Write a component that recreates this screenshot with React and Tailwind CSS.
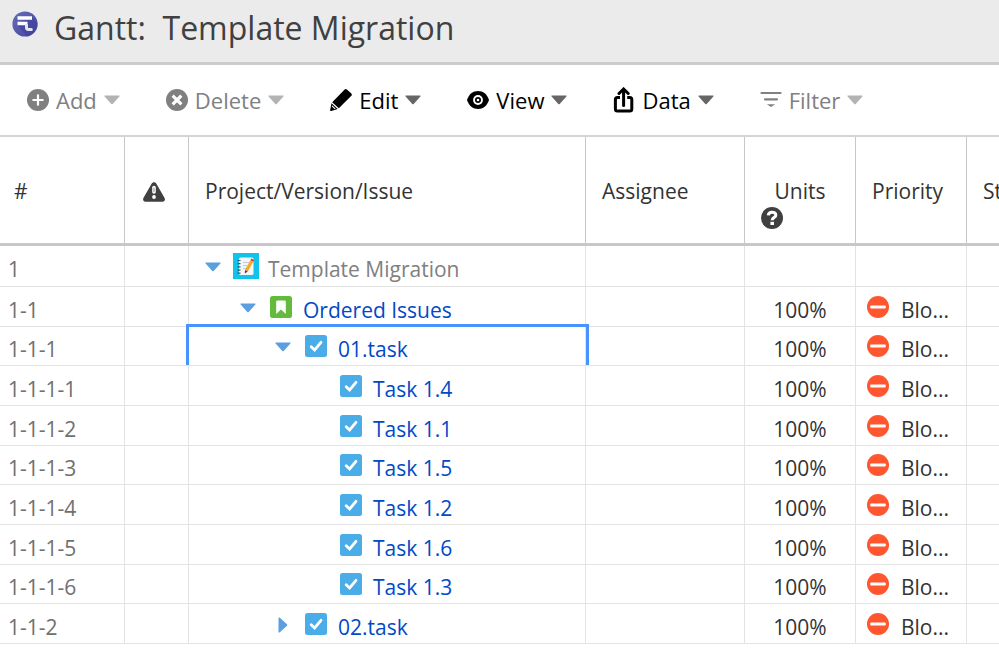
import React, { useState } from "react";

const rows = [
  { id: "1", name: "Template Migration", level: 0, type: "project", open: true },
  { id: "1-1", name: "Ordered Issues", level: 1, type: "story", open: true, units: "100%", priority: "Blo..." },
  { id: "1-1-1", name: "01.task", level: 2, type: "task", open: true, units: "100%", priority: "Blo..." },
  { id: "1-1-1-1", name: "Task 1.4", level: 3, type: "task", units: "100%", priority: "Blo..." },
  { id: "1-1-1-2", name: "Task 1.1", level: 3, type: "task", units: "100%", priority: "Blo..." },
  { id: "1-1-1-3", name: "Task 1.5", level: 3, type: "task", units: "100%", priority: "Blo..." },
  { id: "1-1-1-4", name: "Task 1.2", level: 3, type: "task", units: "100%", priority: "Blo..." },
  { id: "1-1-1-5", name: "Task 1.6", level: 3, type: "task", units: "100%", priority: "Blo..." },
  { id: "1-1-1-6", name: "Task 1.3", level: 3, type: "task", units: "100%", priority: "Blo..." },
  { id: "1-1-2", name: "02.task", level: 2, type: "task", open: false, units: "100%", priority: "Blo..." },
];

const indent = ["pl-[16px]", "pl-[51px]", "pl-[86px]", "pl-[121px]"];

const GanttLogo = () => (
  <svg viewBox="0 0 26 26" className="w-[26px] h-[26px] shrink-0" aria-hidden="true">
    <defs>
      <linearGradient id="logo" x1="0" y1="0" x2="1" y2="1">
        <stop offset="0" stopColor="#656bb9" />
        <stop offset="1" stopColor="#4347a0" />
      </linearGradient>
    </defs>
    <circle cx="13" cy="13" r="12.6" fill="url(#logo)" />
    <path d="M20 6 25.5 11.500A12.600 12.600 0 0 1 15 25.400L5.500 14z" fill="#3c4094" opacity=".5" />
    <path d="M5.500 5.300h14.500v3.500H5.500zM5.500 10.800h10v3.400H5.500z" fill="#fff" />
    <path d="M14.500 14v2.500c0 1.200.6 1.900 1.800 1.900h3" stroke="#e4e5f3" strokeWidth="3" strokeLinecap="round" fill="none" />
  </svg>
);

const AddIcon = () => (
  <svg viewBox="0 0 22 22" className="w-[22px] h-[22px]" aria-hidden="true">
    <circle cx="11" cy="11" r="11" fill="currentColor" />
    <path d="M11 6.300v9.400M6.300 11h9.400" stroke="#fff" strokeWidth="2.200" strokeLinecap="round" />
  </svg>
);

const DeleteIcon = () => (
  <svg viewBox="0 0 22 22" className="w-[22px] h-[22px]" aria-hidden="true">
    <circle cx="11" cy="11" r="11" fill="currentColor" />
    <path d="m7.800 7.800 6.400 6.400M14.200 7.800l-6.400 6.400" stroke="#fff" strokeWidth="3.200" strokeLinecap="square" />
  </svg>
);

const EditIcon = () => (
  <svg viewBox="0 0 22 22" className="w-[22px] h-[22px]" aria-hidden="true" fill="currentColor">
    <path d="M14.400.7a2 2 0 0 1 2.800 0l3.900 3.500a2 2 0 0 1 0 2.900L8.800 19.300 2.200 13.200z" />
    <path d="M1.500 14.200 7.700 20l-6.400 1.900a.9.900 0 0 1-1.100-1.100z" />
    <path d="m2 16.800 3.200 3" stroke="#fff" strokeWidth="1.100" />
  </svg>
);

const ViewIcon = () => (
  <svg viewBox="0 0 22 22" className="w-[22px] h-[22px]" aria-hidden="true">
    <path d="M0 11C1.800 5.200 6 2 11 2S20.200 5.200 22 11c-1.800 5.800-6 9-11 9S1.800 16.800 0 11z" fill="currentColor" />
    <circle cx="11" cy="11" r="4.900" fill="#fff" />
    <circle cx="11" cy="11" r="3" fill="currentColor" />
    <circle cx="11" cy="11" r="1.300" fill="#fff" />
  </svg>
);

const DataIcon = () => (
  <svg viewBox="0 0 22 26" className="w-[22px] h-[26px]" aria-hidden="true" fill="none" stroke="currentColor" strokeWidth="3">
    <path d="M7 10.600H4.400a2 2 0 0 0-2 2v9.400a2 2 0 0 0 2 2h12.400a2 2 0 0 0 2-2v-9.400a2 2 0 0 0-2-2h-2.600" />
    <path d="M10.600 18.500V3" strokeLinecap="round" />
    <path d="M6 6.500 10.600 2l4.600 4.500" strokeLinecap="round" />
  </svg>
);

const FilterIcon = () => (
  <svg viewBox="0 0 22 22" className="w-[22px] h-[22px]" aria-hidden="true" stroke="currentColor" strokeWidth="2.200" strokeLinecap="round">
    <path d="M1.500 4h19M5 10.300h12" />
    <path d="M9.500 16h3l-1.500 1z" fill="currentColor" strokeWidth="1.600" />
  </svg>
);

const Caret = ({ className }) => (
  <svg viewBox="0 0 16 10" className={className} aria-hidden="true" fill="currentColor">
    <path d="M1 .5h14c.6 0 .8.7.4 1.100L8.700 9a1 1 0 0 1-1.400 0L.6 1.600C.2 1.200.4.5 1 .5z" />
  </svg>
);

const WarningIcon = () => (
  <svg viewBox="0 0 22 20" className="w-[22px] h-[20px]" aria-hidden="true">
    <path d="M8.600 1.700c1-2 3.800-2 4.800 0l8.200 14.300c.9 1.700-.1 3.700-2 3.700H2.400c-1.900 0-2.900-2-2-3.700z" fill="#404040" />
    <path d="M11 5.500v4.500" stroke="#fff" strokeWidth="3.600" strokeLinecap="round" />
    <path d="M11 6v3.500" stroke="#404040" strokeWidth=".6" strokeLinecap="round" />
    <circle cx="11" cy="15" r="1.900" fill="#fff" />
  </svg>
);

const HelpIcon = () => (
  <svg viewBox="0 0 22 22" className="w-[22px] h-[22px]" aria-hidden="true">
    <circle cx="11" cy="11" r="11" fill="#404040" />
    <path d="M7.300 8.400C7.500 6.300 9 5.200 11 5.200c2.200 0 3.800 1.100 3.800 3 0 2.400-3.600 2.400-3.600 5" fill="none" stroke="#fff" strokeWidth="3.100" />
    <rect x="9.400" y="14.800" width="3.600" height="3.200" fill="#fff" />
  </svg>
);

const ProjectIcon = () => (
  <svg viewBox="0 0 26 26" className="w-[26px] h-[26px]" aria-hidden="true">
    <rect width="26" height="26" fill="#0fc3ea" />
    <rect x="6" y="4.500" width="14.500" height="17.500" rx="1.500" fill="#f4f7fa" />
    <path d="M4.500 7.500h3M4.500 10.700h3M4.500 13.900h3M4.500 17.100h3M4.500 20.200h3" stroke="#44505c" strokeWidth="1.200" />
    <path d="M10 9.500h6M10 12.500h4M10 15.500h3" stroke="#c3cdd6" strokeWidth="1" />
    <path d="m17.400 7.200 2.800 1.600-5.400 9.700-2.800-1.600z" fill="#f9a825" />
    <path d="m17.400 7.200 1-1.700 2.800 1.600-1 1.700z" fill="#e53935" />
    <path d="m12 16.900 2.800 1.600-3 2z" fill="#5d4037" />
  </svg>
);

const StoryIcon = () => (
  <svg viewBox="0 0 22 22" className="w-[22px] h-[22px]" aria-hidden="true">
    <rect width="22" height="22" rx="2.500" fill="#63ba3c" />
    <path d="M6.200 5.800a1.300 1.300 0 0 1 1.300-1.300h7a1.300 1.300 0 0 1 1.300 1.300V18L11 13.600 6.200 18z" fill="#fff" />
  </svg>
);

const TaskIcon = () => (
  <svg viewBox="0 0 22 22" className="w-[22px] h-[22px]" aria-hidden="true">
    <rect width="22" height="22" rx="2.500" fill="#4bade8" />
    <path d="m6.200 11.800 3.400 3.200L16 7.300" fill="none" stroke="#fff" strokeWidth="2.800" strokeLinecap="round" />
  </svg>
);

const BlockerIcon = () => (
  <svg viewBox="0 0 22 22" className="w-[22px] h-[22px] shrink-0" aria-hidden="true">
    <circle cx="11" cy="11" r="11" fill="#ff5630" />
    <rect x="3.200" y="9.500" width="15.600" height="3" rx="1" fill="#fff" />
  </svg>
);

const menus = [
  { label: "Add", icon: AddIcon, disabled: true },
  { label: "Delete", icon: DeleteIcon, disabled: true },
  { label: "Edit", icon: EditIcon },
  { label: "View", icon: ViewIcon },
  { label: "Data", icon: DataIcon },
  { label: "Filter", icon: FilterIcon, disabled: true },
];

const typeIcons = { project: ProjectIcon, story: StoryIcon, task: TaskIcon };

const headCell = "h-[109px] pt-[40px] align-top font-normal leading-[28px] whitespace-nowrap border-r border-[#c8c8c8] border-b-3 last:border-r-0";
const cell = "p-0 border-r border-b border-[#e3e3e3] last:border-r-0";

const App = () => {
  const [selected, setSelected] = useState("1-1-1");

  return (
    <div className="min-h-screen bg-white text-[#333] font-['Open_Sans','Noto_Sans',sans-serif] text-[21px] overflow-x-hidden">
      <header className="flex items-start gap-4 px-3 pt-2 pb-[14px] bg-[#ebebeb] border-b-3 border-[#ccc]">
        <div className="mt-[3px]">
          <GanttLogo />
        </div>
        <h1 className="text-[32px] leading-[40px] text-[#404040] whitespace-pre">Gantt:  Template Migration</h1>
      </header>

      <nav className="flex items-center gap-[46px] h-[72px] px-[27px] border-b-2 border-[#d4d4d4] text-[22px]">
        {menus.map(({ label, icon: Icon, disabled }) => (
          <button
            key={label}
            type="button"
            disabled={disabled}
            className={disabled ? "flex items-center gap-[7px] text-[#808080]" : "flex items-center gap-[7px] text-black"}
          >
            <Icon />
            <span>{label}</span>
            <Caret className={disabled ? "w-4 h-[10px] text-[#b3b3b3]" : "w-4 h-[10px] text-[#666]"} />
          </button>
        ))}
      </nav>

      <table className="w-full table-fixed border-separate border-spacing-0">
        <colgroup>
          <col className="w-[125px]" />
          <col className="w-[64px]" />
          <col className="w-[397px]" />
          <col className="w-[159px]" />
          <col className="w-[111px]" />
          <col className="w-[111px]" />
          <col />
        </colgroup>
        <thead>
          <tr>
            <th className={`${headCell} pl-[14px] text-left`}>#</th>
            <th className={`${headCell} pl-[18px]`} aria-label="Warnings">
              <span className="flex h-[30px] items-center">
                <WarningIcon />
              </span>
            </th>
            <th className={`${headCell} pl-4 text-left`}>Project/Version/Issue</th>
            <th className={`${headCell} pl-4 text-left`}>Assignee</th>
            <th className={headCell}>
              Units
              <span className="block pt-0.5 pl-4">
                <HelpIcon />
              </span>
            </th>
            <th className={`${headCell} pl-4 text-left`}>Priority</th>
            <th className={`${headCell} pl-4 text-left`}>St</th>
          </tr>
        </thead>
        <tbody>
          {rows.map((row) => {
            const TypeIcon = typeIcons[row.type];
            const isProject = row.type === "project";
            return (
              <tr
                key={row.id}
                onClick={() => setSelected(row.id)}
                className="h-[40px] first:h-[41px] nth-[3n]:h-[39px]"
              >
                <td className={`${cell} pl-2 pt-1.5 leading-[28px] text-[#707070]`}>{row.id}</td>
                <td className={cell}></td>
                <td className={`${cell} relative ${indent[row.level]}`}>
                  <div className={isProject ? "flex items-center gap-[12px]" : "flex items-center gap-[14px]"}>
                    {row.open === undefined ? (
                      <span className="w-4"></span>
                    ) : (
                      <button type="button" aria-label="Toggle" className="flex justify-center w-4 mt-0.5">
                        <Caret className={row.open ? "w-4 h-[10px] text-[#5c9fe0]" : "w-4 h-[10px] text-[#5c9fe0] -rotate-90"} />
                      </button>
                    )}
                    <div className={isProject ? "flex items-center gap-[9px]" : "flex items-center gap-[11px]"}>
                      <TypeIcon />
                      {isProject ? (
                        <span className="pt-1.5 leading-[28px] text-[#808080]">{row.name}</span>
                      ) : (
                        <a href="#" className="pt-1.5 leading-[28px] text-[#0049c7]">{row.name}</a>
                      )}
                    </div>
                  </div>
                  {selected === row.id && (
                    <div className="absolute z-10 -top-[3px] -left-[3px] -right-[4px] bottom-0 border-3 border-b-0 border-[#4794ff] pointer-events-none"></div>
                  )}
                </td>
                <td className={cell}></td>
                <td className={`${cell} pt-1.5 leading-[28px] text-center`}>{row.units}</td>
                <td className={`${cell} pl-[11px]`}>
                  {row.priority && (
                    <div className="flex items-center gap-3">
                      <BlockerIcon />
                      <span className="pt-1.5 leading-[28px]">{row.priority}</span>
                    </div>
                  )}
                </td>
                <td className={cell}></td>
              </tr>
            );
          })}
        </tbody>
      </table>
    </div>
  );
};

export default App;
